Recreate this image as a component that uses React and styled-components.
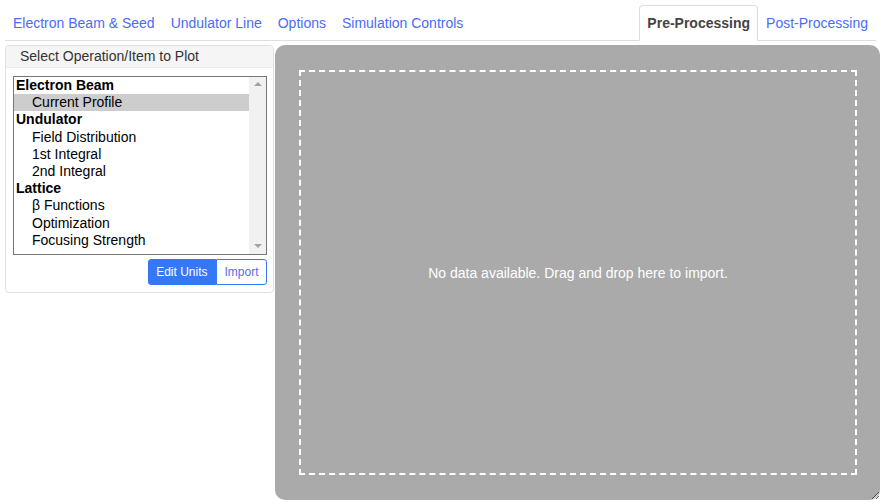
import React from "react";
import styled, { createGlobalStyle } from "styled-components";

const Global = createGlobalStyle`
  html, body { margin: 0; padding: 0; background: #fff; }
  body { font-family: "Liberation Sans", Arial, sans-serif; font-size: 14px; color: #222; }
  * { box-sizing: border-box; }
`;

const Page = styled.div`
  padding: 5px 1px 4px 5px;
  height: 504px;
  display: flex;
  flex-direction: column;
`;

const TabBar = styled.div`
  display: flex;
  border-bottom: 1px solid #dedede;
  margin-right: 4px;
`;

const Spacer = styled.div`
  flex: 1;
`;

const Tab = styled.div`
  padding: 7px 7px;
  line-height: 20px;
  font-size: 14px;
  border: 1px solid transparent;
  border-top-left-radius: 4px;
  border-top-right-radius: 4px;
  margin-bottom: ${(p) => (p.$active ? "-1px" : "0")};
  height: ${(p) => (p.$active ? "36px" : "35px")};
  color: ${(p) => (p.$active ? "#444" : "#4a6cf7")};
  font-weight: ${(p) => (p.$active ? "bold" : "normal")};
  background: ${(p) => (p.$active ? "#fff" : "transparent")};
  ${(p) => p.$active && "border-color: #dedede #dedede #fff #dedede;"}
  cursor: pointer;
  white-space: nowrap;
`;

const Main = styled.div`
  margin-top: 4px;
  display: flex;
  gap: 1px;
  flex: 1;
  min-height: 0;
`;

const Panel = styled.div`
  width: 269px;
  flex: none;
  align-self: flex-start;
  border: 1px solid #e0e0e0;
  border-radius: 4px;
  background: #fff;
  overflow: hidden;
`;

const PanelHeader = styled.div`
  height: 22px;
  line-height: 21px;
  padding: 0 14px;
  background: #f5f5f5;
  border-bottom: 1px solid #ececec;
  color: #333;
  font-size: 14px;
`;

const PanelBody = styled.div`
  padding: 8px 6px 7px 7px;
  display: flex;
  flex-direction: column;
  gap: 4px;
`;

const ListBox = styled.div`
  height: 179px;
  border: 1px solid #767676;
  display: flex;
  background: #fff;
`;

const Items = styled.div`
  flex: 1;
  display: flex;
  flex-direction: column;
`;

const Item = styled.div`
  height: 17.2px;
  line-height: 16px;
  font-size: 14px;
  color: #000;
  padding-left: ${(p) => (p.$group ? "2px" : "18px")};
  font-weight: ${(p) => (p.$group ? "bold" : "normal")};
  background: ${(p) => (p.$selected ? "#cdcdcd" : "transparent")};
  white-space: nowrap;
`;

const ScrollTrack = styled.div`
  width: 17px;
  background: #f1f1f1;
  display: flex;
  flex-direction: column;
  justify-content: space-between;
  align-items: center;
  padding: 5px 0 6px;
`;

const Arrow = styled.div`
  width: 0;
  height: 0;
  border-left: 4px solid transparent;
  border-right: 4px solid transparent;
  ${(p) =>
    p.$down
      ? "border-top: 4px solid #a3a3a3;"
      : "border-bottom: 4px solid #a3a3a3;"}
`;

const ButtonRow = styled.div`
  display: flex;
  justify-content: flex-end;
`;

const Button = styled.button`
  height: 26px;
  font-family: "Liberation Sans", Arial, sans-serif;
  font-size: 12px;
  padding: 0 7.5px;
  border: 1px solid #3478f6;
  background: ${(p) => (p.$primary ? "#3478f6" : "#fff")};
  color: ${(p) => (p.$primary ? "#fff" : "#5a6af2")};
  border-radius: ${(p) => (p.$primary ? "3px 0 0 3px" : "0 3px 3px 0")};
  cursor: pointer;
`;

const Plot = styled.div`
  flex: 1;
  background: #aaaaaa;
  border-radius: 10px;
  padding: 25px 23px 25px 24px;
  display: flex;
  resize: both;
  overflow: hidden;
`;

const DropZone = styled.div`
  flex: 1;
  border: 2px dashed #fff;
  display: flex;
  align-items: center;
  justify-content: center;
  color: #fff;
  font-size: 14px;
`;

const leftTabs = ["Electron Beam & Seed", "Undulator Line", "Options", "Simulation Controls"];

const items = [
  { label: "Electron Beam", group: true },
  { label: "Current Profile", selected: true },
  { label: "Undulator", group: true },
  { label: "Field Distribution" },
  { label: "1st Integral" },
  { label: "2nd Integral" },
  { label: "Lattice", group: true },
  { label: "β Functions" },
  { label: "Optimization" },
  { label: "Focusing Strength" },
];

export default function App() {
  return (
    <>
      <Global />
      <Page>
        <TabBar>
          {leftTabs.map((t) => (
            <Tab key={t}>{t}</Tab>
          ))}
          <Spacer />
          <Tab $active>Pre-Processing</Tab>
          <Tab>Post-Processing</Tab>
        </TabBar>
        <Main>
          <Panel>
            <PanelHeader>Select Operation/Item to Plot</PanelHeader>
            <PanelBody>
              <ListBox>
                <Items>
                  {items.map((it) => (
                    <Item key={it.label} $group={it.group} $selected={it.selected}>
                      {it.label}
                    </Item>
                  ))}
                </Items>
                <ScrollTrack>
                  <Arrow />
                  <Arrow $down />
                </ScrollTrack>
              </ListBox>
              <ButtonRow>
                <Button $primary>Edit Units</Button>
                <Button>Import</Button>
              </ButtonRow>
            </PanelBody>
          </Panel>
          <Plot>
            <DropZone>No data available. Drag and drop here to import.</DropZone>
          </Plot>
        </Main>
      </Page>
    </>
  );
}
